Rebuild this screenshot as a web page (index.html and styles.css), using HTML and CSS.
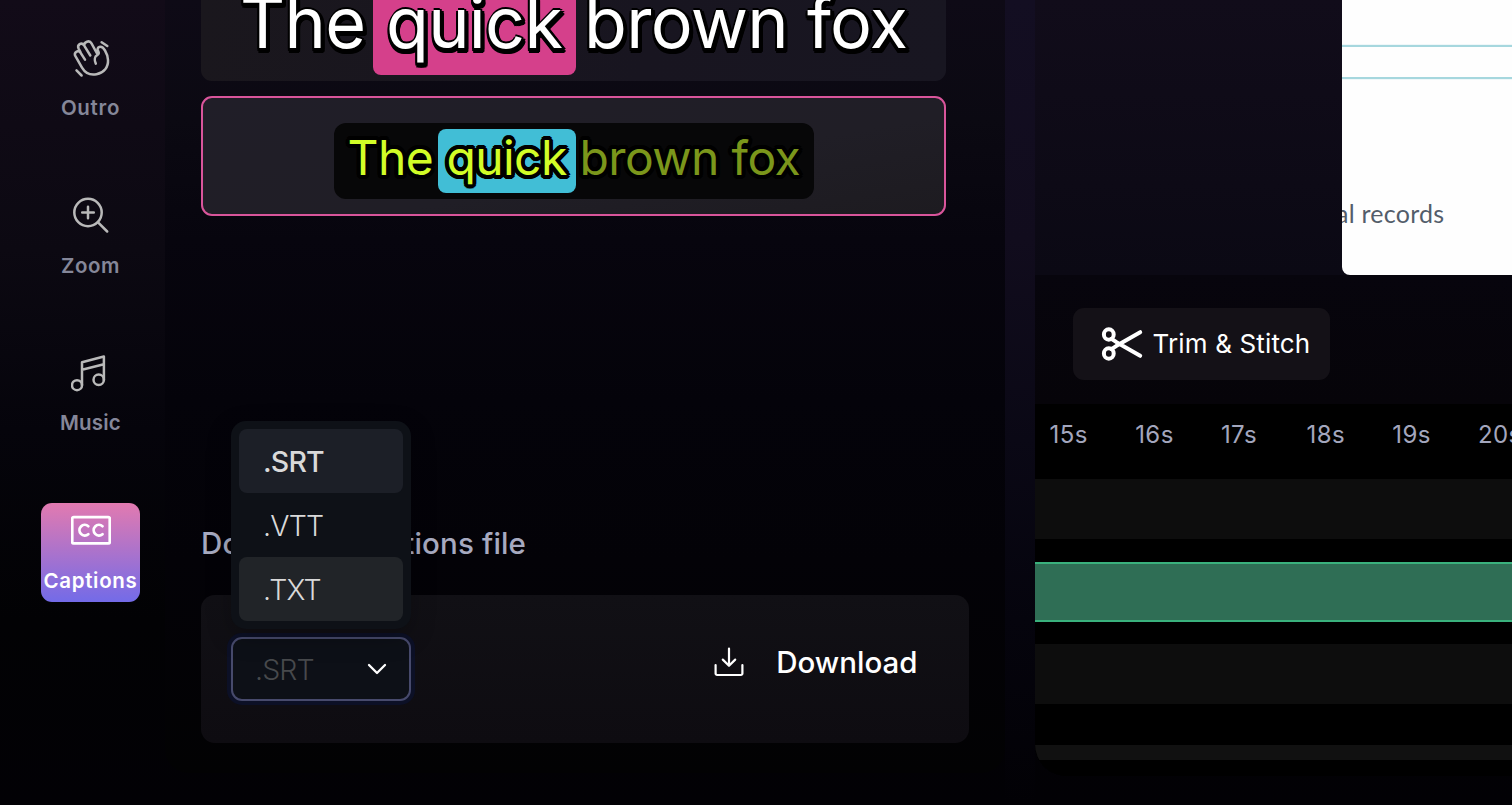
FILE: index.html
```html
<!DOCTYPE html>
<html lang="en">
<head>
<meta charset="utf-8">
<title>Video editor – Captions</title>
<link rel="stylesheet" href="styles.css">
</head>
<body>
<div class="app">
  <nav class="sidebar">
    <a class="tool">
      <svg class="tool-icon" viewBox="0 0 40 40"><path d="M14 21.600 9.400 14.500C7.600 11.700 3 14 4 17.400L11 29.600C14.500 35.500 20 37.300 25.500 36.200 33 34.700 37.500 29 37 22 36.800 18.500 35.500 15 34 12.500 32.300 9.600 30.500 8.300 28.300 9 26.300 9.700 26.200 11.500 27.200 13.200 28.200 15 28 16.200 26.200 17.200 23.300 18.800 23.300 22.500 24.800 25.600M9.600 14.400 7.600 10.600C5.800 6.800 10.500 3.700 12.900 7.200L19.300 17.500M13.300 7.800C12.600 3.800 18.500 1.700 20.500 5.300L26 15.500"/><path d="M30.600 4.200 36.300 8M5.500 32.300 10.600 37.500"/></svg>
      <span class="tool-label outro">Outro</span>
    </a>
    <a class="tool">
      <svg class="tool-icon" viewBox="0 0 40 40"><circle cx="17" cy="17.500" r="13.700"/><path d="m26.800 27.200 9.400 9.300M17 11.700v11.600M11.200 17.500h11.600"/></svg>
      <span class="tool-label zoom">Zoom</span>
    </a>
    <a class="tool">
      <svg class="tool-icon" viewBox="0 0 40 40"><circle cx="6" cy="32.200" r="5"/><circle cx="27.700" cy="26.800" r="5.200"/><path d="M11 32V9.300l21.900-5.800V27M11 16.800l21.900-5.500"/></svg>
      <span class="tool-label music">Music</span>
    </a>
    <a class="tool active">
      <svg class="tool-icon" viewBox="0 0 40 40"><rect x="1.200" y="7.200" width="37.600" height="26.200" rx="1.500"/><path d="M17.300 16.200a5.300 5.300 0 1 0 0 8M31.500 16.200a5.300 5.300 0 1 0 0 8"/></svg>
      <span class="tool-label captions">Captions</span>
    </a>
  </nav>

  <main class="panel">
    <div class="preset big"><span class="word first">The</span><span class="word hit">quick</span><span class="word rest">brown fox</span></div>
    <div class="preset selected">
      <div class="sample"><span class="word first">The</span><span class="word hit">quick</span><span class="word rest">brown fox</span></div>
    </div>
    <h2 class="heading">Download captions file</h2>
    <section class="download-card">
      <div class="select">
        <span class="select-value">.SRT</span>
        <svg class="chevron" viewBox="0 0 20 12"><path d="m2 2 8 8 8-8"/></svg>
        <ul class="menu">
          <li class="option chosen">.SRT</li>
          <li class="option">.VTT</li>
          <li class="option hover">.TXT</li>
        </ul>
      </div>
      <button class="download">
        <svg class="download-icon" viewBox="0 0 30 30"><path d="M15 1.500v17M8.800 12.600l6.200 6.200 6.200-6.200M1.600 18v8.500a1.500 1.500 0 0 0 1.500 1.500h23.800a1.500 1.500 0 0 0 1.500-1.500V18"/></svg>
        <span>Download</span>
      </button>
    </section>
  </main>

  <section class="stage">
    <div class="preview">
      <div class="slide">
        <div class="rule-box"></div>
        <p class="slide-text">al records</p>
      </div>
    </div>
    <div class="toolbar">
      <button class="trim">
        <svg class="scissors" viewBox="0 0 42 34"><ellipse cx="7.800" cy="7.500" rx="4.900" ry="5.200"/><ellipse cx="7.800" cy="26.500" rx="4.900" ry="5.200"/><path d="M10.500 11.800 15.500 15.200 39.200 28.800M10.500 22.200 15.500 18.800 39.200 5.200"/></svg>
        <span>Trim &amp; Stitch</span>
      </button>
    </div>
    <div class="timeline">
      <div class="ticks"><span>15s</span><span>16s</span><span>17s</span><span>18s</span><span>19s</span><span>20s</span></div>
      <div class="track"></div>
      <div class="track clip"></div>
      <div class="track"></div>
      <div class="scrollbar"></div>
    </div>
  </section>
</div>
</body>
</html>
```
FILE: styles.css
```css
* { box-sizing: border-box; }
body {
  margin: 0;
  width: 1512px;
  height: 805px;
  overflow: hidden;
  background: linear-gradient(180deg, #120b18 0, #0c0912 250px, #05040b 430px, #020204 620px, #020105 805px);
  color: #fff;
  font-family: Inter, "Liberation Sans", sans-serif;
}
button { border: 0; padding: 0; color: inherit; font: inherit; }
svg { fill: none; stroke: currentColor; stroke-linecap: round; stroke-linejoin: round; flex: none; }
.app { display: flex; height: 805px; }

.sidebar { width: 165px; padding: 30.5px 0 0 41px; display: flex; flex-direction: column; gap: 58.5px; flex: none; }
.tool { width: 99px; height: 99px; border-radius: 11px; display: flex; flex-direction: column; align-items: center; padding-top: 7px; color: #b9b9b9; }
.tool-icon { width: 40px; height: 40px; stroke-width: 2.5; }
.tool-label { margin-top: 16.5px; height: 28px; line-height: 28px; font-size: 20.5px; font-weight: 600; color: #858799; white-space: nowrap; }
.outro { letter-spacing: .7px; }
.zoom { letter-spacing: .5px; }
.music { letter-spacing: .2px; }
.captions { letter-spacing: .65px; }
.active { color: #fff; background: linear-gradient(#e27ab0, #736be8); }
.active .tool-icon { stroke-width: 2.8; }
.active .tool-label { color: #fff; margin-top: 17px; }

.panel { width: 840px; height: 773px; padding: 0 36px; border-radius: 0 0 24px 24px; background: linear-gradient(180deg, #0e0a16 0, #0b0912 120px, #07050e 240px, #04030a 400px, #030207 560px, #020203 773px); flex: none; }
.preset { width: 745px; border-radius: 11px; display: flex; justify-content: flex-start; white-space: nowrap; }
.big { height: 81px; border-radius: 0 0 11px 11px; padding-left: 39px; background: linear-gradient(100deg, #1a171d, #181520 60%, #181621); font-size: 70px; letter-spacing: -.7px; overflow: hidden; }
.big .word {
  height: 96px;
  margin-top: -21px;
  line-height: 88px;
  text-shadow: 4px 4px 0 #000, 3px 5px 0 #000, 1px 5px 0 #000, -1px 5px 0 #000, -2px 3px 0 #000, -2px 1px 0 #000, 0 -2px 0 #000, 2px -1px 0 #000, 4px 1px 0 #000, 4px 3px 0 #000;
}
.big .first { width: 126px; }
.big .hit { background: #d5408b; border-radius: 8px; width: 203px; padding-left: 13px; margin-left: 7px; }
.big .rest { padding-left: 8px; }
.selected { margin-top: 15px; height: 120px; padding: 25px 0 0 131px; border: 2px solid #d9559b; background: linear-gradient(170deg, #201e28, #201e26 60%, #1d1b20); }
.sample { width: 480px; height: 76px; padding: 6px 0 0 13.5px; border-radius: 12px; display: flex; background: #070708; color: #d2fd27; font-size: 48px; line-height: 57px; letter-spacing: -.6px; }
.sample .word { text-shadow: 4px 0 #000, 3.7px 1.5px #000, 2.8px 2.8px #000, 1.5px 3.7px #000, 0 4px #000, -1.5px 3.7px #000, -2.8px 2.8px #000, -3.7px 1.5px #000, -4px 0 #000, -3.7px -1.5px #000, -2.8px -2.8px #000, -1.5px -3.7px #000, 0 -4px #000, 1.5px -3.7px #000, 2.8px -2.8px #000, 3.7px -1.5px #000; }
.sample .first { width: 85px; }
.sample .hit { width: 138px; height: 64px; margin-left: 5px; padding-left: 9px; border-radius: 8px; background: #41bed6; }
.sample .rest { margin-left: 4px; color: #7b961b; }

.heading { margin: 309px 0 0; height: 36px; line-height: 36px; font-size: 29.5px; font-weight: 500; color: #a7aac0; white-space: nowrap; letter-spacing: .15px; }
.download-card { width: 768px; height: 148px; margin-top: 34px; padding: 42px 51.5px 0 30px; border-radius: 14px; display: flex; justify-content: space-between; align-items: flex-start; background: linear-gradient(#111015, #0e0c11); }
.select { position: relative; width: 180px; height: 64px; padding: 0 22px; border: 2px solid #474a6c; border-radius: 11px; box-shadow: 0 0 0 4px #0c1026; background: #0d1017; display: flex; align-items: center; justify-content: space-between; }
.select-value { font-size: 28.5px; font-weight: 300; letter-spacing: -.9px; color: #47494c; }
.chevron { width: 20px; height: 12px; stroke-width: 2.3; }
.menu { position: absolute; left: -2px; bottom: 70px; width: 180px; height: 208px; margin: 0; padding: 8px; border-radius: 15px; list-style: none; background: #0e1117; box-shadow: 0 8px 24px rgba(0,0,0,.25); }
.option { height: 64px; padding-left: 24px; border-radius: 8px; line-height: 66px; font-size: 28.5px; font-weight: 300; letter-spacing: -.8px; color: #d9d9d9; }
.chosen { background: #1c1f27; font-weight: 500; letter-spacing: -.8px; }
.hover { background: #212428; }
.download { display: flex; align-items: center; gap: 32px; height: 50px; background: none; font-size: 29.5px; font-weight: 500; }
.download-icon { width: 30px; height: 30px; stroke-width: 2.2; }

.stage { margin-left: 30px; width: 477px; height: 776px; flex: none; overflow: hidden; border-radius: 0 0 0 32px; background: #010101; }
.app::before { content: ""; position: absolute; z-index: -1; left: 1005px; top: 0; width: 30px; height: 805px; background: linear-gradient(#130e22, #110c1d 240px, #0a0815 440px, #05040d 620px, #020105); }
.preview { height: 275px; padding-left: 307px; background: linear-gradient(#110c1a, #0b0914); }
.slide { height: 275px; padding-top: 45px; overflow: hidden; border-radius: 0 0 0 8px; background: #fefefe; }
.rule-box { height: 34px; border: solid #a6d7de; border-width: 2px 0; box-shadow: 0 0 1px #a6d7de; }
.slide-text { margin: 117px 0 0 -6px; line-height: 34px; font-size: 25px; letter-spacing: .25px; font-family: Lato, Inter, sans-serif; color: #535d6a; white-space: nowrap; }
.toolbar { height: 129px; padding: 33px 0 0 38px; background: linear-gradient(#07050d, #060409); }
.trim { width: 257px; height: 72px; padding-left: 28px; border-radius: 11px; display: flex; align-items: center; gap: 9.5px; background: #141117; font-size: 26px; line-height: 30px; letter-spacing: .15px; white-space: nowrap; }
.scissors { width: 42px; height: 34px; stroke-width: 4; }
.timeline { height: 372px; background: #000; }
.ticks { height: 75px; padding: 15px 0 0 14.5px; display: flex; font-size: 24px; line-height: 32px; color: #a3a6bd; }
.ticks span { width: 85.7px; flex: none; letter-spacing: .4px; }
.track { height: 60px; margin-bottom: 23px; background: #0d0d0d; }
.clip { border: solid #3ab17d; border-width: 2px 0; margin-bottom: 22px; background: #2f6e55; }
.scrollbar { height: 15px; margin-top: 41px; background: #111; }
```
